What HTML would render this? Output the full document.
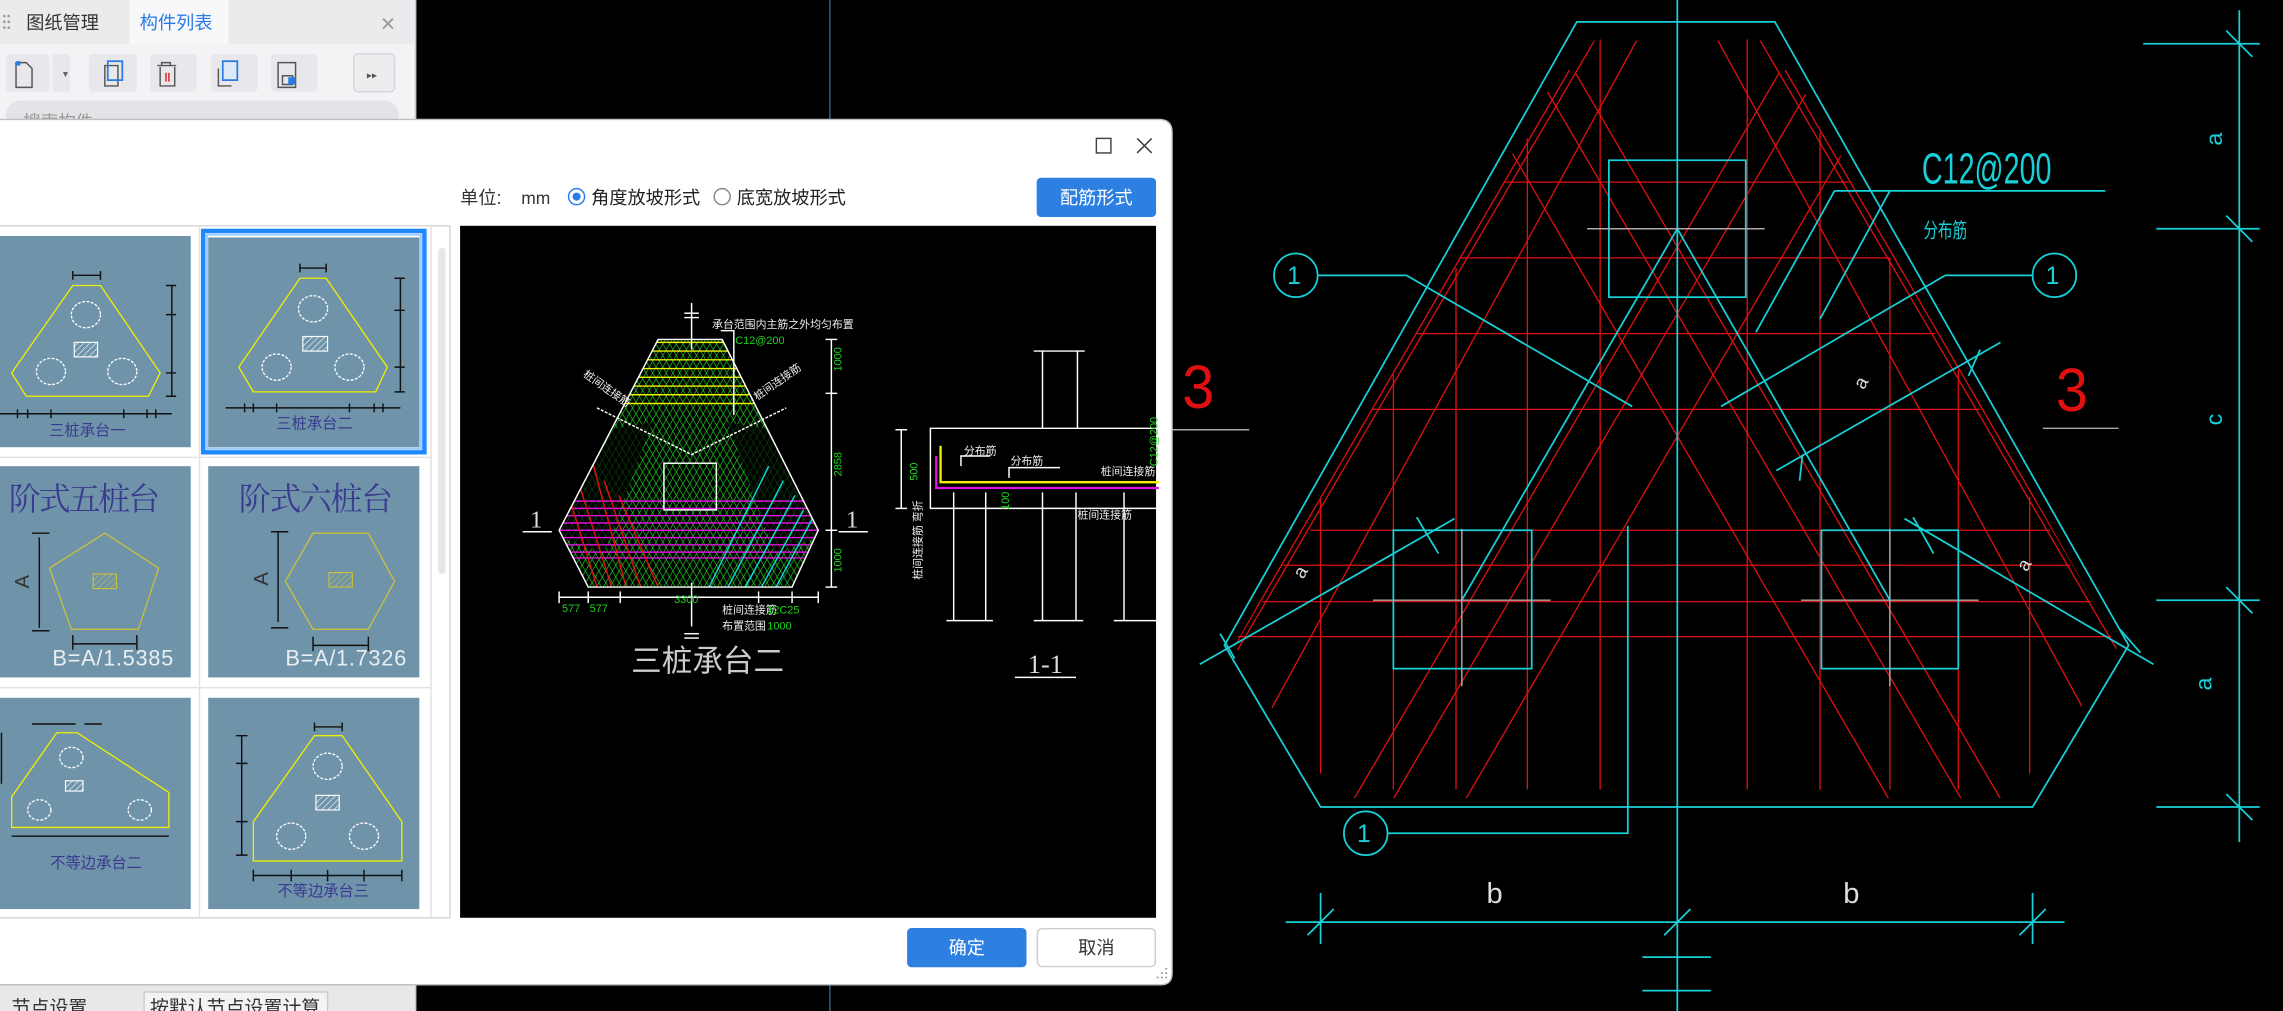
<!DOCTYPE html>
<html><head><meta charset="utf-8"><style>
html,body{margin:0;padding:0;background:#000;overflow:hidden}
svg{display:block}
text{font-family:"Liberation Sans","Noto Sans CJK SC",sans-serif}
.s{font-family:"Liberation Serif","Noto Serif CJK SC",serif}
</style></head><body>
<svg width="2283" height="1011" viewBox="0 0 1568 694" preserveAspectRatio="none" xmlns="http://www.w3.org/2000/svg">
<defs>
<clipPath id="outer"><polygon points="1086,22 1216,22 1455,443 1392,548 911,548 848,443"/></clipPath>
<clipPath id="trap"><polygon points="452,233 496,233 562,364 544,403 404,403 384,364"/></clipPath>
<pattern id="g1" width="4" height="4" patternUnits="userSpaceOnUse" patternTransform="rotate(30)"><line x1="0" y1="0" x2="0" y2="4" stroke="#1fd21f" stroke-width="0.9"/></pattern>
<pattern id="g2" width="4" height="4" patternUnits="userSpaceOnUse" patternTransform="rotate(-30)"><line x1="0" y1="0" x2="0" y2="4" stroke="#1fd21f" stroke-width="0.9"/></pattern>
<pattern id="hat" width="3" height="3" patternUnits="userSpaceOnUse" patternTransform="rotate(45)"><line x1="0" y1="0" x2="0" y2="3" stroke="#fff" stroke-width="0.8"/></pattern>
<pattern id="haty" width="3" height="3" patternUnits="userSpaceOnUse" patternTransform="rotate(45)"><line x1="0" y1="0" x2="0" y2="3" stroke="#c8c040" stroke-width="0.8"/></pattern>
</defs>

<rect width="1568" height="694" fill="#000"/>
<line x1="570" y1="0" x2="570" y2="694" stroke="#40607a" stroke-width="1"/>

<g stroke="#e01010" stroke-width="0.9" fill="none">
<line x1="907" y1="343" x2="907" y2="531"/><line x1="957" y1="257" x2="957" y2="542"/>
<line x1="1000" y1="184" x2="1000" y2="542"/><line x1="1049" y1="95" x2="1049" y2="542"/>
<line x1="1099" y1="27" x2="1099" y2="542"/><line x1="1200" y1="27" x2="1200" y2="542"/>
<line x1="1250" y1="91" x2="1250" y2="542"/><line x1="1298" y1="177" x2="1298" y2="542"/>
<line x1="1345" y1="254" x2="1345" y2="542"/><line x1="1394" y1="341" x2="1394" y2="531"/>
<line x1="1033" y1="125" x2="1270" y2="125"/><line x1="1002" y1="177" x2="1298" y2="177"/>
<line x1="973" y1="229" x2="1329" y2="229"/><line x1="943" y1="281" x2="1360" y2="281"/>
<line x1="900" y1="364" x2="1408" y2="364"/><line x1="881" y1="388" x2="1422" y2="388"/>
<line x1="867" y1="413" x2="1436" y2="413"/><line x1="850" y1="437" x2="1450" y2="437"/>
<g clip-path="url(#outer)">
<line x1="1078" y1="48" x2="780" y2="560"/><line x1="1095" y1="28" x2="795" y2="540"/>
<line x1="1124" y1="28" x2="844" y2="540"/><line x1="1222" y1="50" x2="922" y2="562"/>
<line x1="1250" y1="48" x2="956" y2="550"/><line x1="1280" y1="80" x2="1000" y2="560"/>
<line x1="1226" y1="48" x2="1524" y2="560"/><line x1="1209" y1="28" x2="1509" y2="540"/>
<line x1="1180" y1="28" x2="1460" y2="540"/><line x1="1082" y1="50" x2="1382" y2="562"/>
<line x1="1054" y1="48" x2="1348" y2="550"/><line x1="1024" y1="80" x2="1304" y2="560"/>
</g>
</g>

<g stroke="#18d0d8" stroke-width="1.2" fill="none">
<line x1="1152" y1="0" x2="1152" y2="694"/>
<polygon points="1083,15 1219,15 1462,443 1396,554 907,554 841,443"/>
<rect x="1105" y="110" width="94" height="94"/>
<rect x="957" y="364" width="95" height="95"/>
<rect x="1251" y="364" width="94" height="95"/>
<polyline points="1004,412 1152,157 1298,412"/>
<circle cx="890" cy="189" r="15"/><line x1="905" y1="189" x2="966" y2="189"/><line x1="966" y1="189" x2="1121" y2="279"/>
<circle cx="1411" cy="189" r="15"/><line x1="1396" y1="189" x2="1336" y2="189"/><line x1="1336" y1="189" x2="1182" y2="279"/>
<circle cx="938" cy="572" r="15"/><polyline points="953,572 1118,572 1118,361"/>
<line x1="1260" y1="131" x2="1446" y2="131"/><line x1="1260" y1="131" x2="1206" y2="228"/><line x1="1298" y1="131" x2="1250" y2="219"/>
<line x1="1220" y1="323" x2="1374" y2="235"/>
<line x1="824" y1="456" x2="999" y2="356"/>
<line x1="1308" y1="356" x2="1479" y2="456"/>
<line x1="1538" y1="7" x2="1538" y2="578"/>
<line x1="1472" y1="30" x2="1552" y2="30"/><line x1="1481" y1="157" x2="1552" y2="157"/>
<line x1="1481" y1="412" x2="1552" y2="412"/><line x1="1481" y1="554" x2="1552" y2="554"/>
<line x1="1529" y1="21" x2="1547" y2="39"/><line x1="1529" y1="148" x2="1547" y2="166"/>
<line x1="1529" y1="403" x2="1547" y2="421"/><line x1="1529" y1="545" x2="1547" y2="563"/>
<line x1="883" y1="633" x2="1418" y2="633"/>
<line x1="907" y1="613" x2="907" y2="648"/><line x1="1396" y1="613" x2="1396" y2="648"/>
<line x1="898" y1="642" x2="916" y2="624"/><line x1="1143" y1="642" x2="1161" y2="624"/><line x1="1387" y1="642" x2="1405" y2="624"/>
<line x1="1128" y1="657" x2="1175" y2="657"/><line x1="1128" y1="680" x2="1175" y2="680"/>
<line x1="838" y1="435" x2="848" y2="452"/><line x1="1456" y1="432" x2="1470" y2="448"/>
<line x1="973" y1="355" x2="988" y2="380"/><line x1="1314" y1="355" x2="1328" y2="380"/>
<line x1="1360" y1="240" x2="1352" y2="258"/><line x1="1238" y1="312" x2="1236" y2="330"/>
</g>
<g stroke="#aaa" stroke-width="1"><line x1="1090" y1="157" x2="1212" y2="157"/><line x1="943" y1="412" x2="1065" y2="412"/><line x1="1237" y1="412" x2="1359" y2="412"/><line x1="1004" y1="363" x2="1004" y2="471"/><line x1="1298" y1="363" x2="1298" y2="471"/>
<line x1="800" y1="295" x2="858" y2="295"/><line x1="1403" y1="294" x2="1455" y2="294"/></g>
<g fill="#18d0d8" stroke="none">
<text x="1320" y="126" font-size="30" textLength="89" lengthAdjust="spacingAndGlyphs">C12@200</text>
<text x="1321" y="163" font-size="14" textLength="30" lengthAdjust="spacingAndGlyphs">分布筋</text>
<text x="884" y="195" font-size="17">1</text><text x="1405" y="195" font-size="17">1</text><text x="932" y="578" font-size="17">1</text>
<text x="0" y="0" font-size="16" transform="translate(1526,100) rotate(-90)">a</text>
<text x="0" y="0" font-size="16" transform="translate(1526,292) rotate(-90)">c</text>
<text x="0" y="0" font-size="16" transform="translate(1519,474) rotate(-90)">a</text>
</g>
<g fill="#ddd"><text x="1021" y="620" font-size="20">b</text><text x="1266" y="620" font-size="20">b</text>
<text x="0" y="0" font-size="13" transform="translate(1280,268) rotate(-60)">a</text>
<text x="0" y="0" font-size="13" transform="translate(895,398) rotate(-60)">a</text>
<text x="0" y="0" font-size="13" transform="translate(1392,393) rotate(-60)">a</text></g>
<g fill="#e01010"><text x="812" y="280" font-size="42" textLength="22" lengthAdjust="spacingAndGlyphs">3</text><text x="1412" y="282" font-size="42" textLength="22" lengthAdjust="spacingAndGlyphs">3</text></g>

<rect x="0" y="0" width="285" height="694" fill="#f3f3f5"/>
<line x1="285.5" y1="0" x2="285.5" y2="694" stroke="#c8c8cc"/>
<rect x="0" y="0" width="285" height="30" fill="#ebebee"/>
<rect x="89" y="0" width="68" height="30" fill="#f8f8fa"/>
<g fill="#999"><circle cx="3" cy="11" r="0.9"/><circle cx="6" cy="11" r="0.9"/><circle cx="3" cy="15" r="0.9"/><circle cx="6" cy="15" r="0.9"/><circle cx="3" cy="19" r="0.9"/><circle cx="6" cy="19" r="0.9"/></g>
<text x="18" y="20" font-size="12.5" fill="#333">图纸管理</text>
<text x="96" y="20" font-size="12.5" fill="#2a7be4">构件列表</text>
<text x="261" y="21" font-size="13" fill="#999">✕</text>
<g fill="#e8e8ec">
<rect x="4" y="37" width="30" height="26" rx="3"/><rect x="36" y="37" width="12" height="26" rx="2"/>
<rect x="61" y="37" width="33" height="26" rx="3"/><rect x="103" y="37" width="32" height="26" rx="3"/>
<rect x="145" y="37" width="32" height="26" rx="3"/><rect x="186" y="37" width="32" height="26" rx="3"/>
<rect x="243" y="37" width="28" height="26" rx="3" fill="#ededf0" stroke="#d6d6da"/>
</g>
<g fill="none" stroke="#555" stroke-width="1">
<path d="M11 43h7l4 4v13h-11z"/><path d="M72 45h9v14h-9z"/><path d="M108 45h13M111 45v-2h6v2M110 46v13h10v-13"/>
<path d="M150 47v12h9"/><path d="M191 43h12v17h-12z M194 52h7v6h-7z"/>
</g>
<rect x="11" y="42" width="3" height="3" fill="#2a7be4"/>
<rect x="74" y="42" width="10" height="13" fill="none" stroke="#2a7be4" stroke-width="1.2"/>
<rect x="153" y="42" width="10" height="13" fill="#dde8f8" stroke="#2a7be4" stroke-width="1.2"/>
<path d="M114 50v6M116 50v6" stroke="#d22" stroke-width="1"/>
<rect x="198" y="53" width="5" height="5" fill="#2a7be4"/>
<text x="42" y="53" font-size="6" fill="#666">▼</text>
<text x="252" y="54" font-size="7" fill="#555">▸▸</text>
<rect x="4" y="69" width="270" height="20" rx="10" fill="#e4e4e8"/>
<text x="16" y="88" font-size="12" fill="#999">搜索构件</text>

<rect x="0" y="676" width="285" height="18" fill="#e8e8ea"/>
<text x="8" y="696" font-size="13" fill="#333">节点设置</text>
<rect x="99" y="681" width="126" height="16" fill="#f3f3f3" stroke="#ccc"/>
<text x="103" y="696" font-size="13" fill="#333">按默认节点设置计算</text>

<path d="M-5 82 H796 Q805 82 805 91 V668 Q805 676 797 676 H-5 Z" fill="#fff" stroke="#c0c0c0"/>
<rect x="753" y="95" width="10" height="10" fill="none" stroke="#444" stroke-width="1"/>
<path d="M781 95l10 10M791 95l-10 10" stroke="#444" stroke-width="1.1"/>
<text x="316" y="140" font-size="12.5" fill="#333">单位:</text>
<text x="358" y="140" font-size="12" fill="#333">mm</text>
<circle cx="396" cy="135" r="5.5" fill="#fff" stroke="#2a7be4"/><circle cx="396" cy="135" r="2.8" fill="#2a7be4"/>
<text x="406" y="140" font-size="12.5" fill="#222">角度放坡形式</text>
<circle cx="496" cy="135" r="5.5" fill="#fff" stroke="#888"/>
<text x="506" y="140" font-size="12.5" fill="#222">底宽放坡形式</text>
<rect x="712" y="122" width="82" height="27" rx="3" fill="#2d80e2"/>
<text x="753" y="140" font-size="12.5" fill="#fff" text-anchor="middle">配筋形式</text>

<rect x="-2" y="155" width="311" height="475" fill="#fff" stroke="#d8d8d8"/>
<g stroke="#e2e2e2"><line x1="0" y1="314" x2="296" y2="314"/><line x1="0" y1="472" x2="296" y2="472"/><line x1="137" y1="155" x2="137" y2="630"/><line x1="296" y1="155" x2="296" y2="630"/></g>
<rect x="301" y="170" width="5" height="224" rx="2.5" fill="#e6e6e6"/>
<g fill="#6f93a9">
<rect x="0" y="162" width="131" height="145"/>
<rect x="0" y="320" width="131" height="145"/>
<rect x="0" y="479" width="131" height="145"/>
<rect x="143" y="163" width="145" height="144"/>
<rect x="143" y="320" width="145" height="145"/>
<rect x="143" y="479" width="145" height="145"/>
</g>
<rect x="139.5" y="158.5" width="152" height="152" fill="none" stroke="#1e88ff" stroke-width="3"/>
<rect x="142" y="161" width="147" height="147" fill="none" stroke="#9cc8ff" stroke-width="1.5"/>

<g fill="none" stroke="#f0f000" stroke-width="0.9">
<polygon points="50,196 69,196 110,256 102,272 18,272 8,256"/>
<polygon points="206,191 224,191 266,252 258,269 174,269 164,252"/>
<polygon points="39,503 53,503 116,544 116,568 8,568 8,547"/>
<polygon points="216,505 235,505 276,564 276,591 174,591 174,564"/>
</g>
<g fill="none" stroke="#c8c040" stroke-width="0.9">
<polygon points="72,366 109,390 95,432 49,432 34,390"/>
<polygon points="215,366 253,366 271,399 253,432 215,432 196,399"/>
</g>
<g fill="url(#haty)" stroke="#c8c040" stroke-width="0.8"><rect x="64" y="394" width="16" height="10"/><rect x="226" y="393" width="16" height="10"/></g>
<g fill="none" stroke="#fff" stroke-width="0.9" stroke-dasharray="2 1">
<ellipse cx="59" cy="216" rx="10" ry="9"/><ellipse cx="35" cy="255" rx="10" ry="9"/><ellipse cx="84" cy="255" rx="10" ry="9"/>
<ellipse cx="215" cy="212" rx="10" ry="9"/><ellipse cx="190" cy="252" rx="10" ry="9"/><ellipse cx="240" cy="252" rx="10" ry="9"/>
<ellipse cx="49" cy="520" rx="8" ry="7"/><ellipse cx="27" cy="556" rx="8" ry="7"/><ellipse cx="96" cy="556" rx="8" ry="7"/>
<ellipse cx="225" cy="526" rx="10" ry="9"/><ellipse cx="200" cy="574" rx="10" ry="9"/><ellipse cx="250" cy="574" rx="10" ry="9"/>
</g>
<g fill="url(#hat)" stroke="#fff" stroke-width="0.8"><rect x="51" y="235" width="16" height="10"/><rect x="208" y="231" width="17" height="10"/><rect x="45" y="536" width="12" height="7"/><rect x="217" y="546" width="16" height="10"/></g>
<g stroke="#111" stroke-width="1" fill="none">
<path d="M50 189h19M50 186v6M69 186v6"/><path d="M206 184h18M206 181v6M224 181v6"/>
<path d="M118 196v76M114 196h7M114 216h7M114 256h7M114 272h7"/>
<path d="M275 191v78M271 191h7M271 213h7M271 252h7M271 269h7"/>
<path d="M0 284h118M12 281v6M19 281v6M35 281v6M85 281v6M101 281v6M107 281v6"/>
<path d="M155 280h120M168 277v6M174 277v6M190 277v6M240 277v6M257 277v6M263 277v6"/>
<path d="M27 369v62M22 366h12M22 433h12M50 442h44M50 436v10M94 436v10"/>
<path d="M191 365v62M186 365h12M186 431h12M215 443h38M215 437v10M253 437v10"/>
<path d="M22 497h30M58 497h12M1 503v35"/><path d="M8 574h108"/>
<path d="M216 499h19M216 496v6M235 496v6M166 505v82M162 505h8M162 524h8M162 564h8M162 587h8M174 601h102M174 597v8M200 597v8M225 597v8M250 597v8M276 597v8"/>
</g>
<g fill="#3a3a90" font-size="10.5">
<text x="60" y="299" text-anchor="middle">三桩承台一</text>
<text x="216" y="294" text-anchor="middle">三桩承台二</text>
<text x="66" y="596" text-anchor="middle">不等边承台二</text>
<text x="222" y="615" text-anchor="middle">不等边承台三</text>
</g>
<g fill="#3a3a90" font-size="22"><text x="6" y="350" class="s" textLength="104" lengthAdjust="spacing">阶式五桩台</text><text x="164" y="350" class="s" textLength="106" lengthAdjust="spacing">阶式六桩台</text></g>
<g fill="#e8eef2" font-size="15"><text x="36" y="457" font-family="Liberation Mono,monospace" textLength="83" lengthAdjust="spacing">B=A/1.5385</text><text x="196" y="457" font-family="Liberation Mono,monospace" textLength="83" lengthAdjust="spacing">B=A/1.7326</text>
<text x="0" y="0" font-size="14" fill="#333" transform="translate(20,404) rotate(-90)">A</text><text x="0" y="0" font-size="14" fill="#333" transform="translate(184,402) rotate(-90)">A</text></g>

<rect x="316" y="155" width="478" height="475" fill="#000"/>
<g clip-path="url(#trap)">
<rect x="380" y="230" width="190" height="180" fill="url(#g1)"/>
<rect x="380" y="230" width="190" height="180" fill="url(#g2)"/>
<polygon points="384,300 372,364 415,380 448,290" fill="#000" opacity="0.7"/>
<polygon points="562,300 574,364 532,380 500,290" fill="#000" opacity="0.7"/>
<g stroke="#f0f000" stroke-width="1"><line x1="440" y1="235" x2="510" y2="235"/><line x1="430" y1="241" x2="510" y2="241"/><line x1="425" y1="247" x2="512" y2="247"/><line x1="420" y1="253" x2="515" y2="253"/><line x1="415" y1="259" x2="520" y2="259"/><line x1="410" y1="265" x2="523" y2="265"/><line x1="405" y1="271" x2="526" y2="271"/><line x1="400" y1="277" x2="528" y2="277"/></g>
<g stroke="#e010e0" stroke-width="1"><line x1="380" y1="344" x2="570" y2="344"/><line x1="380" y1="349" x2="570" y2="349"/><line x1="380" y1="354" x2="570" y2="354"/><line x1="380" y1="359" x2="570" y2="359"/><line x1="380" y1="364" x2="570" y2="364"/><line x1="380" y1="369" x2="570" y2="369"/><line x1="380" y1="374" x2="570" y2="374"/><line x1="380" y1="379" x2="570" y2="379"/><line x1="380" y1="383" x2="570" y2="383"/></g>
<g stroke="#e01010" stroke-width="1"><line x1="405" y1="310" x2="430" y2="403"/><line x1="397" y1="330" x2="420" y2="403"/><line x1="392" y1="345" x2="410" y2="403"/><line x1="415" y1="330" x2="440" y2="403"/><line x1="425" y1="340" x2="452" y2="403"/></g>
<g stroke="#10d8e0" stroke-width="1"><line x1="528" y1="320" x2="487" y2="403"/><line x1="538" y1="330" x2="500" y2="403"/><line x1="546" y1="340" x2="512" y2="403"/><line x1="552" y1="350" x2="523" y2="403"/><line x1="558" y1="356" x2="533" y2="403"/></g>
</g>
<g fill="none" stroke="#fff" stroke-width="1">
<polygon points="452,233 496,233 562,364 544,403 404,403 384,364"/>
<rect x="456" y="318" width="36" height="32"/>
<polyline points="410,280 475,312 540,280" stroke-dasharray="2 1"/>
<line x1="475" y1="208" x2="475" y2="240"/><line x1="470" y1="215" x2="480" y2="215"/><line x1="470" y1="218" x2="480" y2="218"/>
<line x1="475" y1="400" x2="475" y2="430"/><line x1="470" y1="435" x2="480" y2="435"/><line x1="470" y1="438" x2="480" y2="438"/>
<line x1="571" y1="233" x2="571" y2="403"/><line x1="567" y1="233" x2="575" y2="233"/><line x1="567" y1="270" x2="575" y2="270"/><line x1="567" y1="364" x2="575" y2="364"/><line x1="567" y1="403" x2="575" y2="403"/>
<line x1="384" y1="410" x2="562" y2="410"/><line x1="384" y1="406" x2="384" y2="414"/><line x1="404" y1="406" x2="404" y2="414"/><line x1="426" y1="406" x2="426" y2="414"/><line x1="521" y1="406" x2="521" y2="414"/><line x1="544" y1="406" x2="544" y2="414"/><line x1="562" y1="406" x2="562" y2="414"/>
<line x1="359" y1="365" x2="379" y2="365"/><line x1="576" y1="365" x2="596" y2="365"/>
<polyline points="495,227 504,227 504,285"/>
<line x1="710" y1="241" x2="745" y2="241"/><line x1="716" y1="241" x2="716" y2="294"/><line x1="740" y1="241" x2="740" y2="294"/>
<polyline points="796,294 639,294 639,349 796,349"/>
<line x1="655" y1="338" x2="655" y2="426"/><line x1="677" y1="338" x2="677" y2="426"/><line x1="716" y1="338" x2="716" y2="426"/><line x1="739" y1="338" x2="739" y2="426"/><line x1="772" y1="338" x2="772" y2="426"/>
<line x1="650" y1="426" x2="682" y2="426"/><line x1="710" y1="426" x2="744" y2="426"/><line x1="765" y1="426" x2="796" y2="426"/>
<line x1="619" y1="295" x2="619" y2="349"/><line x1="615" y1="295" x2="623" y2="295"/><line x1="615" y1="349" x2="623" y2="349"/>
<line x1="697" y1="465" x2="739" y2="465"/>
<polyline points="660,320 660,313 680,313"/><polyline points="693,328 693,321 728,321"/>
</g>
<polyline points="646,306 646,331 796,331" fill="none" stroke="#f0f000" stroke-width="1.6"/>
<polyline points="643,313 643,335 796,335" fill="none" stroke="#e010e0" stroke-width="1.6"/>
<g fill="#eee" font-size="7.5">
<text x="489" y="225">承台范围内主筋之外均匀布置</text>
<text x="496" y="421">桩间连接筋</text><text x="496" y="432">布置范围</text>
<text x="662" y="312">分布筋</text><text x="694" y="319">分布筋</text><text x="756" y="326">桩间连接筋</text><text x="740" y="356">桩间连接筋</text>
<text x="0" y="0" transform="translate(400,258) rotate(35)">桩间连接筋</text>
<text x="0" y="0" transform="translate(520,275) rotate(-35)">桩间连接筋</text>
<text x="0" y="0" transform="translate(633,398) rotate(-90)">桩间连接筋 弯折</text>
</g>
<g fill="#1fd21f" font-size="7.5">
<text x="505" y="236">C12@200</text><text x="527" y="421">12C25</text><text x="527" y="432">1000</text>
<text x="386" y="420">577</text><text x="405" y="420">577</text><text x="463" y="414">3300</text>
<text x="0" y="0" transform="translate(578,255) rotate(-90)">1000</text>
<text x="0" y="0" transform="translate(578,327) rotate(-90)">2858</text>
<text x="0" y="0" transform="translate(578,393) rotate(-90)">1000</text>
<text x="0" y="0" transform="translate(630,330) rotate(-90)">500</text>
<text x="0" y="0" transform="translate(693,350) rotate(-90)">100</text>
<text x="0" y="0" transform="translate(795,320) rotate(-90)">C12@200</text>
</g>
<g fill="#ddd"><text x="364" y="362" font-size="17" class="s">1</text><text x="581" y="362" font-size="17" class="s">1</text>
<text x="486" y="461" font-size="21" text-anchor="middle" fill="#ccc">三桩承台二</text>
<text x="718" y="462" font-size="18" text-anchor="middle" class="s">1-1</text></g>

<rect x="623" y="637" width="82" height="27" rx="3" fill="#2d80e2"/>
<text x="664" y="655" font-size="12.5" fill="#fff" text-anchor="middle">确定</text>
<rect x="712.5" y="637.5" width="81" height="26" rx="3" fill="#fff" stroke="#ccc"/>
<text x="753" y="655" font-size="12.5" fill="#333" text-anchor="middle">取消</text>
<g fill="#999"><circle cx="801" cy="665" r="0.7"/><circle cx="801" cy="668" r="0.7"/><circle cx="798" cy="668" r="0.7"/><circle cx="801" cy="671" r="0.7"/><circle cx="798" cy="671" r="0.7"/><circle cx="795" cy="671" r="0.7"/></g>
</svg>
</body></html>
